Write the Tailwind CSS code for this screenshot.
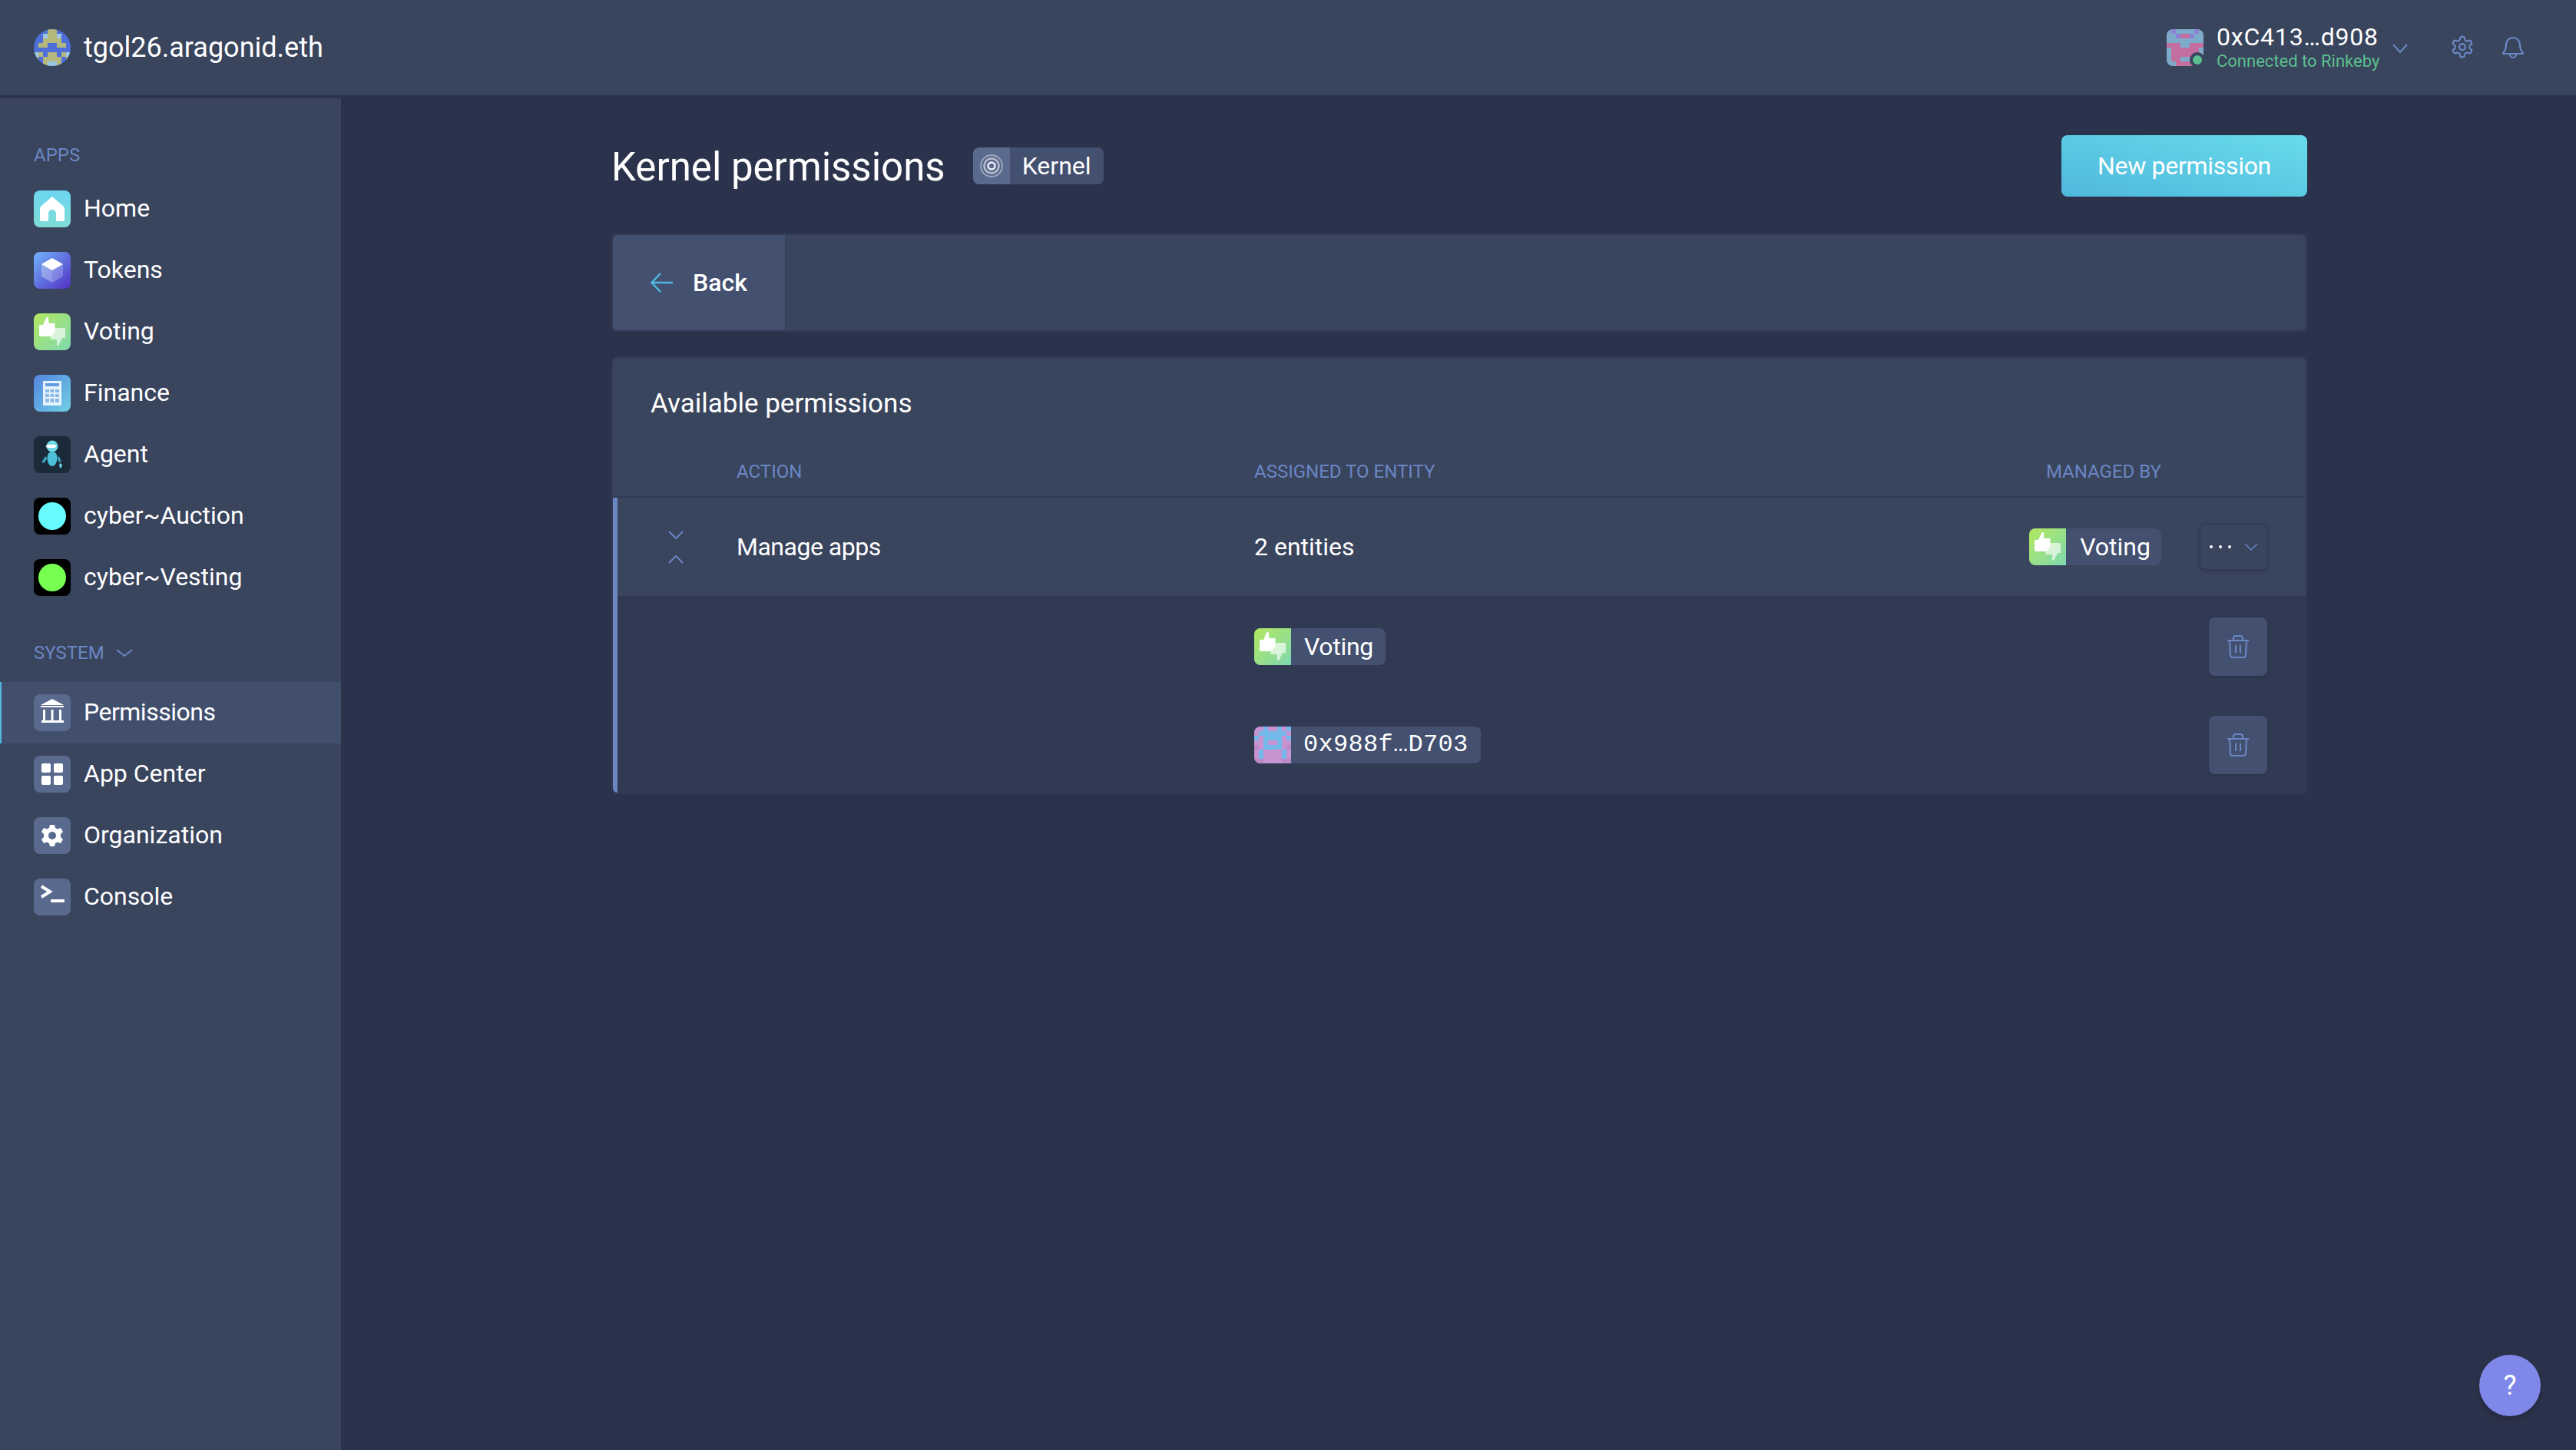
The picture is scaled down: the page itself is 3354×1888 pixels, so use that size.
<!DOCTYPE html>
<html><head><meta charset="utf-8"><title>Kernel permissions</title>
<script src="https://cdn.jsdelivr.net/npm/@tailwindcss/browser@4"></script></head>
<body class="m-0">
<svg width="0" height="0" class="absolute">
<defs>
<linearGradient id="gv" x1="0" y1="0" x2="1" y2="1"><stop offset="0" stop-color="#b3e85f"/><stop offset="1" stop-color="#7fd8b0"/></linearGradient>
<linearGradient id="gh" x1="0" y1="0" x2="0" y2="1"><stop offset="0" stop-color="#6bd6f0"/><stop offset="1" stop-color="#80dcd6"/></linearGradient>
<linearGradient id="gt" x1="0" y1="0" x2="1" y2="1"><stop offset="0" stop-color="#71b4fb"/><stop offset="1" stop-color="#5030c4"/></linearGradient>
<linearGradient id="gf" x1="0" y1="0" x2="1" y2="1"><stop offset="0" stop-color="#5384e0"/><stop offset="1" stop-color="#70d0e4"/></linearGradient>
<symbol id="voting" viewBox="0 0 48 48"><rect width="48" height="48" fill="url(#gv)"/><path d="M26 19h14q1 0 1 1v12h-4l-5 10-2-.5v-7.500h-8l-1-5z" fill="#fff" fill-opacity=".65"/><path d="M7 15h5l4.500-10 2.500.5.500 7.500h8v11l-5 6H9q-2 0-2-2z" fill="#fff"/></symbol>
</defs></svg>
<div class="w-[3354px] h-[1888px] overflow-hidden relative flex flex-col bg-[#2b324b] text-white text-[32px] [font-family:Roboto,sans-serif]">
<!-- header -->
<header class="h-[124px] shrink-0 bg-[#39445d] flex items-center pl-[44px] pr-[66px]">
  <svg class="w-12 h-12 rounded-full" viewBox="0 0 8 8" shape-rendering="crispEdges"><rect width="8" height="8" fill="#4e6fd8"/>
    <g fill="#b5b87c"><rect x="3" width="2" height="2"/><rect x="2" y="2" width="4" height="1"/><rect x="1" y="3" width="2" height="1"/><rect x="5" y="3" width="2" height="1"/><rect x="1" y="5" width="1" height="1"/><rect x="6" y="5" width="1" height="1"/><rect x="3" y="5" width="2" height="1"/><rect x="0" y="6" width="1" height="1"/><rect x="7" y="6" width="1" height="1"/><rect x="2" y="6" width="4" height="1"/><rect x="2" y="7" width="1" height="1"/><rect x="5" y="7" width="1" height="1"/></g>
    <g fill="#9bc8e0"><rect x="2" y="1" width="1" height="1"/><rect x="5" y="1" width="1" height="1"/><rect x="3" y="7" width="2" height="1"/><rect x="0" y="5" width="1" height="1"/><rect x="7" y="5" width="1" height="1"/></g></svg>
  <span class="ml-[17px] text-[36px]">tgol26.aragonid.eth</span>
  <div class="ml-auto flex items-center">
    <div class="relative w-12 h-12">
      <svg class="w-12 h-12 rounded-lg" viewBox="0 0 8 8" shape-rendering="crispEdges"><rect width="8" height="8" fill="#7fabcb"/>
      <g fill="#c26f9f"><rect x="3" y="1" width="2" height="1"/><rect y="3" width="3" height="1"/><rect x="5" y="3" width="3" height="1"/><rect x="1" y="4" width="6" height="2"/><rect x="1" y="6" width="2" height="1"/><rect x="5" y="6" width="2" height="1"/><rect x="2" y="7" width="4" height="1"/></g>
      <g fill="#8a83d6"><rect x="1" width="1" height="1"/><rect x="6" width="1" height="1"/><rect x="2" y="1" width="1" height="1"/><rect x="5" y="1" width="1" height="1"/></g></svg>
      <span class="absolute left-[30px] top-[30px] w-5 h-5 rounded-full bg-[#5bc08f] border-[4px] border-[#39445d]"></span>
    </div>
    <div class="ml-[17px] w-[213px] flex flex-col whitespace-nowrap">
      <span class="text-[32px] leading-[36px] tracking-[0.8px]">0xC413…d908</span>
      <span class="text-[22px] leading-[28px] text-[#5bc08f]">Connected to Rinkeby</span>
    </div>
    <svg class="ml-[14px] w-6 h-6" viewBox="0 0 24 24" fill="none" stroke="#6a87c4" stroke-width="2"><path d="M3 8l9 10 9-10"/></svg>
    <svg class="ml-[53px] -mt-[2px] w-8 h-8" viewBox="0 0 24 24" fill="none" stroke="#6a87c4" stroke-width="1.700"><path d="M12.220 2h-.44a2 2 0 0 0-2 2v.18a2 2 0 0 1-1 1.730l-.43.25a2 2 0 0 1-2 0l-.15-.08a2 2 0 0 0-2.730.73l-.22.38a2 2 0 0 0 .73 2.730l.15.1a2 2 0 0 1 1 1.720v.51a2 2 0 0 1-1 1.740l-.15.09a2 2 0 0 0-.73 2.730l.22.38a2 2 0 0 0 2.730.73l.15-.08a2 2 0 0 1 2 0l.43.25a2 2 0 0 1 1 1.730V20a2 2 0 0 0 2 2h.44a2 2 0 0 0 2-2v-.18a2 2 0 0 1 1-1.730l.43-.25a2 2 0 0 1 2 0l.15.08a2 2 0 0 0 2.730-.73l.22-.39a2 2 0 0 0-.73-2.730l-.15-.08a2 2 0 0 1-1-1.740v-.5a2 2 0 0 1 1-1.740l.15-.09a2 2 0 0 0 .73-2.730l-.22-.38a2 2 0 0 0-2.730-.73l-.15.08a2 2 0 0 1-2 0l-.43-.25a2 2 0 0 1-1-1.730V4a2 2 0 0 0-2-2z"/><circle cx="12" cy="12" r="3"/></svg>
    <svg class="ml-[34px] -mt-[2px] w-8 h-8" viewBox="0 0 32 32" fill="none" stroke="#6a87c4" stroke-width="2.200" stroke-linejoin="round"><path d="M3 24c3-3 4-6 4-11a9 9 0 0 1 18 0c0 5 1 8 4 11v1H3zM12 26a4 4 0 0 0 8 0"/></svg>
  </div>
</header>
<div class="flex-1 min-h-0 flex pt-1">
<!-- sidebar -->
<aside class="w-[444px] shrink-0 bg-[#39445d] pt-[50px]">
  <div class="h-12 pl-[44px] flex items-center text-[24px] text-[#6a87c4] mb-[6px]">APPS</div>
  <a class="h-20 pl-[44px] flex items-center gap-[17px] pb-[2px]"><svg class="w-12 h-12 mt-[2px]" viewBox="0 0 48 48"><rect width="48" height="48" rx="8" fill="url(#gh)"/><path d="M24 8l14 12q2 1.500 2 4v14q0 2-2 2H29V30a5 5 0 0 0-10 0V40h-9q-2 0-2-2V24q0-2.500 2-4z" fill="#fff"/></svg>Home</a>
  <a class="h-20 pl-[44px] flex items-center gap-[17px] pb-[2px]"><svg class="w-12 h-12 mt-[2px]" viewBox="0 0 48 48"><rect width="48" height="48" rx="8" fill="url(#gt)"/><path d="M24 8l14 8v16l-14 8-14-8V16z" fill="#fff" fill-opacity=".22"/><path d="M24 8l14 8-14 8-14-8z" fill="#fff"/><path d="M24 24v16l-14-8V16z" fill="#fff" fill-opacity=".12"/></svg>Tokens</a>
  <a class="h-20 pl-[44px] flex items-center gap-[17px] pb-[2px]"><svg class="w-12 h-12 mt-[2px] rounded-lg"><use href="#voting"/></svg>Voting</a>
  <a class="h-20 pl-[44px] flex items-center gap-[17px] pb-[2px]"><svg class="w-12 h-12 mt-[2px]" viewBox="0 0 48 48"><rect width="48" height="48" rx="8" fill="url(#gf)"/><rect x="12" y="8" width="24" height="32" fill="#fff" fill-opacity=".85"/><rect x="15" y="11" width="18" height="4" fill="#5f9ee0"/><g fill="#6aa8e4" fill-opacity=".75"><rect x="15" y="19" width="5" height="4"/><rect x="21.500" y="19" width="5" height="4"/><rect x="28" y="19" width="5" height="4"/><rect x="15" y="25" width="5" height="4"/><rect x="21.500" y="25" width="5" height="4"/><rect x="28" y="25" width="5" height="4"/><rect x="15" y="31" width="5" height="5"/><rect x="21.500" y="31" width="5" height="5"/><rect x="28" y="31" width="5" height="5"/></g></svg>Finance</a>
  <a class="h-20 pl-[44px] flex items-center gap-[17px] pb-[2px]"><svg class="w-12 h-12 mt-[2px]" viewBox="0 0 48 48"><rect width="48" height="48" rx="8" fill="#1a2a38"/><circle cx="24" cy="13" r="7.500" fill="#6fd8e6"/><rect x="16" y="11" width="13" height="4" rx="2" fill="#fff"/><path d="M24 20c6 0 7 6 6 12-1 5-4 7-6 7s-5-2-6-7c-1-6 0-12 6-12z" fill="#4cc0d8"/><path d="M15 26l-5 8 3 1 5-6zM33 26l3 7-3 1-3-6z" fill="#3a9cb8"/><path d="M34 35q3 1 3 3l-2 4q-3-3-1-7z" fill="#70d0e4"/></svg>Agent</a>
  <a class="h-20 pl-[44px] flex items-center gap-[17px] pb-[2px]"><span class="w-12 h-12 mt-[2px] rounded-lg bg-black flex items-center justify-center"><span class="w-9 h-9 rounded-full bg-[#66fbff]"></span></span>cyber~Auction</a>
  <a class="h-20 pl-[44px] flex items-center gap-[17px] pb-[2px]"><span class="w-12 h-12 mt-[2px] rounded-lg bg-black flex items-center justify-center"><span class="w-9 h-9 rounded-full bg-[#76ff50]"></span></span>cyber~Vesting</a>
  <div class="h-12 mt-[34px] mb-[14px] pl-[44px] flex items-center text-[24px] text-[#6a87c4]">SYSTEM<svg class="ml-[14px] w-6 h-6" viewBox="0 0 24 24" fill="none" stroke="#6a87c4" stroke-width="2"><path d="M2 8l10 8 10-8"/></svg></div>
  <a class="h-20 pl-[42px] border-l-2 border-[#4fb8dd] bg-[#414f6c] flex items-center gap-[17px] pb-[2px] tracking-[-0.5px]"><svg class="w-12 h-12 mt-[2px]" viewBox="0 0 48 48"><rect width="48" height="48" rx="8" fill="#5a6a8e"/><path d="M24 6L39 14H9z" fill="#fff"/><rect x="9" y="15" width="30" height="2" fill="#fff"/><rect x="12" y="20" width="3" height="14" fill="#fff"/><rect x="22.500" y="20" width="3" height="14" fill="#fff"/><rect x="33" y="20" width="3" height="14" fill="#fff"/><rect x="10" y="34" width="29" height="3" fill="#fff"/></svg>Permissions</a>
  <a class="h-20 pl-[44px] flex items-center gap-[17px] pb-[2px]"><svg class="w-12 h-12 mt-[2px]" viewBox="0 0 48 48"><rect width="48" height="48" rx="8" fill="#5a6a8e"/><g fill="#fff"><rect x="10" y="10" width="12" height="12" rx="2"/><rect x="26" y="10" width="12" height="12" rx="2"/><rect x="10" y="26" width="12" height="12" rx="2"/><rect x="26" y="26" width="12" height="12" rx="2"/></g></svg>App Center</a>
  <a class="h-20 pl-[44px] flex items-center gap-[17px] pb-[2px]"><svg class="w-12 h-12 mt-[2px]" viewBox="0 0 48 48"><rect width="48" height="48" rx="8" fill="#5a6a8e"/><path fill="#fff" fill-rule="evenodd" d="M21 10h6l1 4 3 1.500 4-1.500 3 5-3 3v4l3 3-3 5-4-1.500-3 1.500-1 4h-6l-1-4-3-1.500-4 1.500-3-5 3-3v-4l-3-3 3-5 4 1.500 3-1.500zM24 19a5 5 0 1 0 0 10 5 5 0 0 0 0-10z"/></svg>Organization</a>
  <a class="h-20 pl-[44px] flex items-center gap-[17px] pb-[2px]"><svg class="w-12 h-12 mt-[2px]" viewBox="0 0 48 48"><rect width="48" height="48" rx="8" fill="#5a6a8e"/><path d="M10 10l11 7-11 7" fill="none" stroke="#fff" stroke-width="4"/><rect x="22" y="27" width="18" height="4" rx="1" fill="#fff"/></svg>Console</a>
</aside>
<!-- main -->
<main class="flex-1 pl-[352px] pr-[350px] pt-[48px]">
  <div class="flex items-center h-20">
    <h1 class="text-[51px] font-normal mt-[4px]">Kernel permissions</h1>
    <span class="ml-[36px] h-12 flex items-stretch rounded-lg overflow-hidden bg-[#435070]">
      <span class="w-12 bg-[#5a6a8e] flex items-center justify-center"><svg class="w-8 h-8" viewBox="0 0 32 32" fill="none" stroke="#fff"><circle cx="16" cy="16" r="14" stroke-width="2" stroke-opacity=".4"/><circle cx="16" cy="16" r="9.500" stroke-width="2.500" stroke-opacity=".55"/><circle cx="16" cy="16" r="4.500" stroke-width="2.500" stroke-opacity=".9"/></svg></span>
      <span class="px-[16px] flex items-center">Kernel</span>
    </span>
    <button class="ml-auto w-[320px] h-20 rounded-lg bg-gradient-to-tr from-[#4fb8dd] to-[#68dcea] text-white text-[32px] tracking-[-0.3px]">New permission</button>
  </div>
  <div class="mt-[48px] h-[128px] border-2 border-[#323b55] rounded-lg bg-[#39445d] flex overflow-hidden">
    <div class="w-[226px] bg-[#435070] border-r-2 border-[#36415b] flex items-center pl-[48px]">
      <svg class="w-8 h-8" viewBox="0 0 32 32" fill="none" stroke="#4fb8dd" stroke-width="2.500"><path d="M30 16H3M14 4L2.500 16 14 28"/></svg>
      <span class="ml-[24px] font-medium">Back</span>
    </div>
  </div>
  <section class="mt-[32px] h-[570px] rounded-lg bg-[#39445d] border-2 border-[#323b55] overflow-hidden flex flex-col">
    <div class="h-[116px] pl-[49px] pt-[36px] text-[35px] leading-[48px]">Available permissions</div>
    <div class="h-[66px] flex items-center text-[24px] text-[#6a87c4] border-b-2 border-[#323b55]">
      <span class="ml-[161px] w-[674px]">ACTION</span><span>ASSIGNED TO ENTITY</span><span class="ml-auto mr-[188px]">MANAGED BY</span>
    </div>
    <div class="flex-1 min-h-0 border-l-[6px] border-[#6a87c4] flex flex-col">
      <div class="h-[130px] shrink-0 flex items-center border-b-2 border-[#2f3850] bg-[#39445d]">
        <div class="w-[151px] mr-[4px] flex flex-col items-center gap-[19px]">
          <svg class="w-5 h-[12px]" viewBox="0 0 20 12" fill="none" stroke="#6a87c4" stroke-width="2"><path d="M1 1l9 9 9-9"/></svg>
          <svg class="w-5 h-[12px]" viewBox="0 0 20 12" fill="none" stroke="#6a87c4" stroke-width="2"><path d="M1 11l9-9 9 9"/></svg>
        </div>
        <span class="w-[674px] tracking-[-0.5px]">Manage apps</span>
        <span>2 entities</span>
        <span class="ml-auto h-12 flex items-stretch rounded-lg overflow-hidden bg-[#435070]"><svg class="w-12 h-12"><use href="#voting"/></svg><span class="pl-[18px] pr-[14px] flex items-center">Voting</span></span>
        <span class="ml-[49px] mr-[49px] w-[90px] h-[62px] rounded-lg bg-[#39445d] border-2 border-[#323b55] shadow-[0_2px_4px_rgba(0,0,0,.12)] flex items-center justify-center gap-[18px]">
          <span class="flex gap-2"><i class="w-1 h-1 rounded-full bg-white"></i><i class="w-1 h-1 rounded-full bg-white"></i><i class="w-1 h-1 rounded-full bg-white"></i></span>
          <svg class="w-4 h-4" viewBox="0 0 16 16" fill="none" stroke="#6a87c4" stroke-width="1.500"><path d="M0 4l8 8 8-8"/></svg>
        </span>
      </div>
      <div class="flex-1 bg-[#303a53] pt-[26px] flex flex-col gap-[52px]">
        <div class="h-[76px] flex items-center">
          <span class="ml-[829px] h-12 flex items-stretch rounded-lg overflow-hidden bg-[#435070]"><svg class="w-12 h-12"><use href="#voting"/></svg><span class="pl-[17px] pr-[16px] flex items-center tracking-[-0.3px]">Voting</span></span>
          <button class="ml-auto mr-[50px] w-[76px] h-[76px] rounded-lg bg-[#435070] shadow-[0_2px_4px_rgba(0,0,0,.12)] flex items-center justify-center"><svg class="w-8 h-8" viewBox="0 0 32 32" fill="none" stroke="#6a87c4" stroke-width="2" stroke-linejoin="round"><path d="M2 8h28M5 8l1 19q0 3 3 3h14q3 0 3-3l1-19M10 8V5q0-3 3-3h6q3 0 3 3v3M13 14v10M19 14v10"/></svg></button>
        </div>
        <div class="h-[76px] flex items-center">
          <span class="ml-[829px] h-12 flex items-stretch rounded-lg overflow-hidden bg-[#435070]">
            <svg class="w-12 h-12" viewBox="0 0 8 8" shape-rendering="crispEdges"><rect width="8" height="8" fill="#c793d0"/>
            <g fill="#74b8ea"><rect x="2" width="1" height="1"/><rect x="5" width="1" height="1"/><rect x="7" width="1" height="1"/><rect y="2" width="1" height="1"/><rect x="7" y="2" width="1" height="1"/><rect x="2" y="1" width="4" height="1"/><rect x="1" y="1" width="1" height="1"/><rect x="6" y="1" width="1" height="1"/><rect x="2" y="2" width="4" height="1"/><rect x="2" y="3" width="1" height="1"/><rect x="5" y="3" width="1" height="1"/><rect x="2" y="4" width="4" height="1"/><rect x="1" y="5" width="1" height="2"/><rect x="6" y="5" width="1" height="2"/></g>
            <g fill="#b98ac6"><rect y="4" width="1" height="1"/><rect x="7" y="4" width="1" height="1"/><rect y="7" width="1" height="1"/><rect x="7" y="7" width="1" height="1"/><rect x="1" y="7" width="1" height="1"/><rect x="6" y="7" width="1" height="1"/></g></svg>
            <span class="pl-[16px] pr-[16px] flex items-center tracking-[0.3px] [font-family:'Liberation_Mono',monospace]">0x988f…D703</span>
          </span>
          <button class="ml-auto mr-[50px] w-[76px] h-[76px] rounded-lg bg-[#435070] shadow-[0_2px_4px_rgba(0,0,0,.12)] flex items-center justify-center"><svg class="w-8 h-8" viewBox="0 0 32 32" fill="none" stroke="#6a87c4" stroke-width="2" stroke-linejoin="round"><path d="M2 8h28M5 8l1 19q0 3 3 3h14q3 0 3-3l1-19M10 8V5q0-3 3-3h6q3 0 3 3v3M13 14v10M19 14v10"/></svg></button>
        </div>
      </div>
    </div>
  </section>
</main>
</div>
<button class="absolute left-[3228px] top-[1764px] w-20 h-20 rounded-full bg-[#7f87e8] shadow-[0_4px_8px_rgba(0,0,0,.18)] flex items-center justify-center text-[36px]">?</button>
</div>
</body></html>
